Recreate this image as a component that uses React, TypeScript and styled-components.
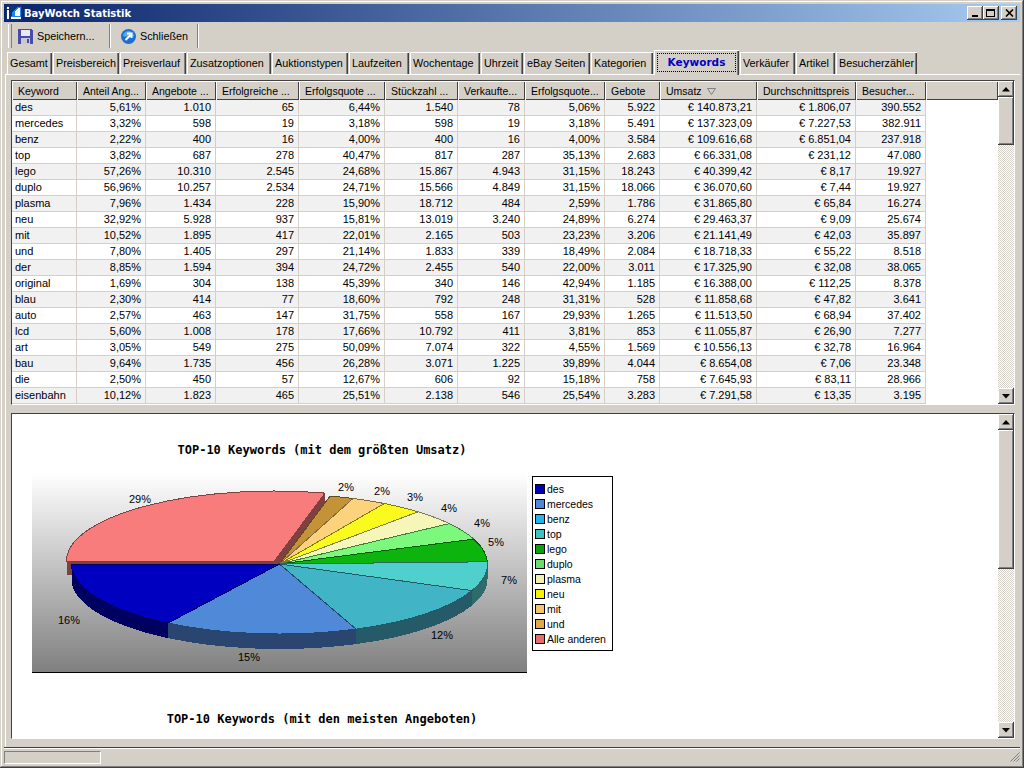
import React from "react";
import styled, { createGlobalStyle } from "styled-components";

const Global = createGlobalStyle`
  html, body { margin: 0; padding: 0; background: #d4d0c8; }
  * { box-sizing: border-box; }
  body { font-family: "Liberation Sans", Arial, sans-serif; font-size: 11px; color: #000; }
`;

const Window = styled.div`
  width: 1024px; height: 768px; overflow: hidden;
  background: #d4d0c8; padding: 4px;
  display: flex; flex-direction: column;
  box-shadow: inset -1px -1px #404040, inset 1px 1px #d4d0c8, inset -2px -2px #808080, inset 2px 2px #fff;
`;
const TitleBar = styled.div`
  height: 18px; flex: none; display: flex; align-items: center;
  background: linear-gradient(90deg, #0a246a, #a6caf0);
  padding: 0 3px 0 2px;
`;
const TitleText = styled.span`
  font: bold 10px "DejaVu Sans", Verdana, sans-serif; color: #fff; margin-left: 2px; flex: 1; white-space: nowrap;
`;
const WinButton = styled.div<{ $gap?: number }>`
  width: 16px; height: 14px; margin-left: ${p => p.$gap ?? 0}px;
  background: #d4d0c8; display: flex; align-items: center; justify-content: center;
  box-shadow: inset -1px -1px #404040, inset 1px 1px #fff, inset -2px -2px #808080;
`;
const Toolbar = styled.div`
  height: 26px; flex: none; margin-top: 1px; display: flex; align-items: stretch; padding-left: 4px;
`;
const Grip = styled.div`
  width: 4px; margin: 1px 0; border-left: 1px solid #fff; border-right: 1px solid #808080;
  box-shadow: inset 0 1px #d4d0c8;
`;
const ToolButton = styled.div<{ $w: number; $pad: number }>`
  width: ${p => p.$w}px; padding-left: ${p => p.$pad}px;
  display: flex; align-items: center; gap: 4px; font-size: 10.8px; white-space: nowrap;
`;
const Etch = styled.div`
  width: 2px; margin: 1px 0; border-left: 1px solid #808080; border-right: 1px solid #fff;
`;
const TabStrip = styled.div`
  height: 25px; flex: none; display: flex; align-items: flex-end; padding-left: 3px; gap: 1px;
  position: relative; z-index: 1;
`;
const Tab = styled.div<{ $w: number; $active?: boolean }>`
  width: ${p => p.$w}px;
  height: ${p => (p.$active ? 25 : 22)}px;
  margin-bottom: ${p => (p.$active ? -1 : 0)}px;
  padding-left: ${p => (p.$active ? 0 : 3)}px;
  background: #d4d0c8; display: flex; align-items: center;
  justify-content: ${p => (p.$active ? "center" : "flex-start")};
  white-space: nowrap; font-size: 10.8px;
  box-shadow: inset 1px 1px #fff, inset -1px 0 #404040, inset -2px 0 #808080;
  ${p => p.$active && `color: #0000c8; font: bold 10.5px "DejaVu Sans", Verdana, sans-serif;`}
`;
const FocusRing = styled.span`
  border: 1px dotted #000; width: calc(100% - 6px); height: 19px; margin-top: -1px;
  display: flex; align-items: center; justify-content: center;
`;
const Panel = styled.div`
  flex: 1; min-height: 0; display: flex; flex-direction: column;
  padding: 5px 5px 6px 5px; border-top: 1px solid #fff; border-left: 1px solid #fff; margin-left: 1px;
`;
const SunkenBox = styled.div<{ $h: number }>`
  height: ${p => p.$h}px; flex: none; display: flex; background: #fff; overflow: hidden;
  border: 1px solid; border-color: #404040 #fff #fff #404040;
`;
const Splitter = styled.div`
  height: 8px; flex: none;
`;
const TableArea = styled.div`
  flex: 1; min-width: 0; overflow: hidden;
`;
const Grid = styled.table`
  width: 100%; table-layout: fixed; border-collapse: separate; border-spacing: 0;
`;
const Head = styled.th`
  height: 19px; padding: 0 0 0 6px; background: #d4d0c8; font-weight: normal; text-align: left;
  white-space: nowrap; overflow: hidden; font-size: 10.5px;
  box-shadow: inset 1px 1px #fff, inset -1px -1px #404040;
`;
const Cell = styled.td<{ $num?: boolean; $alt?: boolean }>`
  height: 16px; padding: ${p => (p.$num ? "0 4px 0 0" : "0 0 0 3px")};
  text-align: ${p => (p.$num ? "right" : "left")};
  background: ${p => (p.$alt ? "#f1f1f1" : "#fff")};
  border-right: 1px solid #d4d0c8; border-bottom: 1px solid #d4d0c8;
  white-space: nowrap; overflow: hidden; line-height: 15px; font-size: 11px;
`;
const Blank = styled.td`
  background: #fff; padding: 0;
`;
const ScrollBar = styled.div`
  width: 16px; flex: none; display: flex; flex-direction: column;
`;
const ScrollBtn = styled.div`
  height: 16px; flex: none; background: #d4d0c8; display: flex; align-items: center; justify-content: center;
  box-shadow: inset -1px -1px #404040, inset 1px 1px #fff, inset -2px -2px #808080;
`;
const Thumb = styled.div<{ $h: number }>`
  height: ${p => p.$h}px; flex: none; background: #d4d0c8;
  box-shadow: inset -1px -1px #404040, inset 1px 1px #fff, inset -2px -2px #808080;
`;
const Track = styled.div`
  flex: 1; background: repeating-conic-gradient(#d4d0c8 0 25%, #fff 0 50%) 0 0 / 2px 2px;
`;
const ChartArea = styled.div`
  flex: 1; min-width: 0; overflow: hidden; background: #fff;
`;
const ChartTitle = styled.div<{ $top: number; $h: number }>`
  width: 620px; text-align: center; padding-top: ${p => p.$top}px; height: ${p => p.$h}px;
  font: bold 12px/16px "DejaVu Sans Mono", monospace; white-space: nowrap;
`;
const ChartRow = styled.div`
  display: flex; align-items: flex-start; padding-left: 20px;
`;
const Plot = styled.svg`
  width: 495px; height: 200px; display: block; flex: none;
`;
const Legend = styled.div`
  width: 81px; height: 175px; margin: 3px 0 0 5px; background: #fff; border: 1px solid #000;
  padding: 4px 0 0 2px; display: flex; flex-direction: column;
`;
const LegendRow = styled.div`
  height: 15px; display: flex; align-items: center; gap: 2px; white-space: nowrap; font-size: 10.5px;
`;
const Swatch = styled.span<{ $c: string }>`
  width: 10px; height: 10px; flex: none; background: ${p => p.$c}; border: 1px solid #000;
`;
const StatusBar = styled.div`
  height: 17px; flex: none; display: flex; align-items: center; justify-content: space-between;
  border-top: 1px solid #404040; box-shadow: inset 0 1px #fff; padding: 2px 0 0 0;
`;
const StatusPane = styled.div`
  width: 97px; height: 13px; border: 1px solid; border-color: #808080 #fff #fff #808080;
`;

const Up = () => (<svg width="8" height="5" viewBox="0 0 8 5"><path d="M4 0L8 4.5H0Z" fill="#000" /></svg>);
const Down = () => (<svg width="8" height="5" viewBox="0 0 8 5"><path d="M0 0H8L4 4.5Z" fill="#000" /></svg>);

const Bar = ({ thumb }: { thumb: number }) => (
  <ScrollBar>
    <ScrollBtn><Up /></ScrollBtn>
    <Thumb $h={thumb} />
    <Track />
    <ScrollBtn><Down /></ScrollBtn>
  </ScrollBar>
);

const AppIcon = () => (
  <svg width="16" height="16" viewBox="0 0 16 16" shapeRendering="crispEdges">
    <rect width="16" height="16" fill="#10307a" />
    <rect x="1" y="2" width="2" height="2" fill="#fff" />
    <rect x="1" y="5" width="2" height="9" fill="#fff" />
    <path d="M6 8L11 2L15 2L15 14L5 14Z" fill="#1e88e8" />
    <path d="M9 7L12 3L14 3L14 11L9 11Z" fill="#fff" />
    <rect x="5" y="12" width="10" height="2" fill="#fff" />
  </svg>
);
const SaveIcon = () => (
  <svg width="15" height="15" viewBox="0 0 15 15" shapeRendering="crispEdges">
    <path d="M0 0H13L15 2V15H0Z" fill="#4a4aa8" />
    <rect x="3" y="1" width="9" height="6" fill="#e8e8f8" />
    <rect x="3" y="9" width="9" height="6" fill="#c8c8d8" />
    <rect x="9" y="10" width="2" height="4" fill="#4a4aa8" />
  </svg>
);
const CloseIcon = () => (
  <svg width="15" height="15" viewBox="0 0 15 15">
    <circle cx="7.5" cy="7.5" r="7.5" fill="#1a6fd0" />
    <path d="M2 7.5A5.5 5.5 0 0 1 13 7.5Z" fill="#5aa8f0" />
    <path d="M4.5 11L9.5 6M6 4.5H10.5V9" stroke="#fff" strokeWidth="2" fill="none" />
  </svg>
);

const tabs: [string, number][] = [
  ["Gesamt", 45], ["Preisbereich", 66], ["Preisverlauf", 66], ["Zusatzoptionen", 84], ["Auktionstypen", 76],
  ["Laufzeiten", 60], ["Wochentage", 70], ["Uhrzeit", 42], ["eBay Seiten", 66], ["Kategorien", 62],
  ["Keywords", 85], ["Verkäufer", 55], ["Artikel", 39], ["Besucherzähler", 81],
];
const cols = [65, 69, 70, 83, 86, 73, 67, 80, 55, 97, 99, 70];
const heads = ["Keyword", "Anteil Ang...", "Angebote ...", "Erfolgreiche ...", "Erfolgsquote ...", "Stückzahl ...", "Verkaufte...", "Erfolgsquote...", "Gebote", "Umsatz", "Durchschnittspreis", "Besucher..."];
const rows = `des|5,61%|1.010|65|6,44%|1.540|78|5,06%|5.922|€ 140.873,21|€ 1.806,07|390.552
mercedes|3,32%|598|19|3,18%|598|19|3,18%|5.491|€ 137.323,09|€ 7.227,53|382.911
benz|2,22%|400|16|4,00%|400|16|4,00%|3.584|€ 109.616,68|€ 6.851,04|237.918
top|3,82%|687|278|40,47%|817|287|35,13%|2.683|€ 66.331,08|€ 231,12|47.080
lego|57,26%|10.310|2.545|24,68%|15.867|4.943|31,15%|18.243|€ 40.399,42|€ 8,17|19.927
duplo|56,96%|10.257|2.534|24,71%|15.566|4.849|31,15%|18.066|€ 36.070,60|€ 7,44|19.927
plasma|7,96%|1.434|228|15,90%|18.712|484|2,59%|1.786|€ 31.865,80|€ 65,84|16.274
neu|32,92%|5.928|937|15,81%|13.019|3.240|24,89%|6.274|€ 29.463,37|€ 9,09|25.674
mit|10,52%|1.895|417|22,01%|2.165|503|23,23%|3.206|€ 21.141,49|€ 42,03|35.897
und|7,80%|1.405|297|21,14%|1.833|339|18,49%|2.084|€ 18.718,33|€ 55,22|8.518
der|8,85%|1.594|394|24,72%|2.455|540|22,00%|3.011|€ 17.325,90|€ 32,08|38.065
original|1,69%|304|138|45,39%|340|146|42,94%|1.185|€ 16.388,00|€ 112,25|8.378
blau|2,30%|414|77|18,60%|792|248|31,31%|528|€ 11.858,68|€ 47,82|3.641
auto|2,57%|463|147|31,75%|558|167|29,93%|1.265|€ 11.513,50|€ 68,94|37.402
lcd|5,60%|1.008|178|17,66%|10.792|411|3,81%|853|€ 11.055,87|€ 26,90|7.277
art|3,05%|549|275|50,09%|7.074|322|4,55%|1.569|€ 10.556,13|€ 32,78|16.964
bau|9,64%|1.735|456|26,28%|3.071|1.225|39,89%|4.044|€ 8.654,08|€ 7,06|23.348
die|2,50%|450|57|12,67%|606|92|15,18%|758|€ 7.645,93|€ 83,11|28.966
eisenbahn|10,12%|1.823|465|25,51%|2.138|546|25,54%|3.283|€ 7.291,58|€ 13,35|3.195`.split("\n").map(r => r.split("|"));

const legend: [string, string][] = [
  ["des", "#0000b8"], ["mercedes", "#4f86d8"], ["benz", "#20b4f0"], ["top", "#3cc0c0"], ["lego", "#0ca00c"],
  ["duplo", "#68e068"], ["plasma", "#f0f0b0"], ["neu", "#f4f400"], ["mit", "#f8c468"], ["und", "#e0a848"], ["Alle anderen", "#e86c6c"],
];

const CX = 279.5, CY = 564, RX = 208, RY = 70, D = 15;
const pt = (f: number, ox = 0, oy = 0) => {
  const t = Math.PI + f * 2 * Math.PI;
  return [CX + RX * Math.cos(t) + ox, CY - RY * Math.sin(t) + oy];
};
const n = (v: number) => v.toFixed(1);
const topPath = (a: number, b: number, ox = 0, oy = 0) => {
  const [x1, y1] = pt(a, ox, oy), [x2, y2] = pt(b, ox, oy);
  return `M${n(CX + ox)} ${n(CY + oy)}L${n(x1)} ${n(y1)}A${RX} ${RY} 0 ${b - a > 0.5 ? 1 : 0} 0 ${n(x2)} ${n(y2)}Z`;
};
const wallPath = (a: number, b: number) => {
  const [x1, y1] = pt(a), [x2, y2] = pt(b);
  return `M${n(x1)} ${n(y1)}A${RX} ${RY} 0 0 0 ${n(x2)} ${n(y2)}L${n(x2)} ${n(y2 + D)}A${RX} ${RY} 0 0 1 ${n(x1)} ${n(y1 + D)}Z`;
};
const OX = -5, OY = -3;
const pinkA = pt(0.711, OX, OY), pinkB = pt(1, OX, OY), pinkC = [CX + OX, CY + OY];
const pinkWalls = `M${n(pinkC[0])} ${n(pinkC[1])}L${n(pinkA[0])} ${n(pinkA[1])}V${n(pinkA[1] + 14)}L${n(pinkC[0])} ${n(pinkC[1] + 14)}Z M${n(pinkB[0])} ${n(pinkB[1])}H${n(pinkC[0])}V${n(pinkC[1] + 14)}H${n(pinkB[0])}Z`;

const upper: [number, number, string, string][] = [
  [0.6925, 0.711, "#c49338", "#624a1c"],
  [0.666, 0.6925, "#fcd27c", "#7e693e"],
  [0.634, 0.666, "#fafa1e", "#7d7d0f"],
  [0.598, 0.634, "#f6f6b8", "#7b7b5c"],
  [0.558, 0.598, "#7cf87c", "#3e7c3e"],
  [0.505, 0.558, "#0eb40e", "#075a07"],
];
const lower: [number, number, string, string, string][] = [
  [0.438, 0.505, "#50d0cc", "#286866", "#2f6a6c"],
  [0.31, 0.438, "#41b4c6", "#205a63", "#265a68"],
  [0.16, 0.31, "#5089d8", "#28456c", "#2a4670"],
  [0, 0.16, "#0000c0", "#000060", "#000060"],
];
const labels: [string, number, number][] = [
  ["29%", 140, 503], ["16%", 69, 624], ["15%", 249, 661], ["12%", 442, 639], ["7%", 509, 584], ["5%", 496, 546],
  ["4%", 482, 527], ["4%", 449, 512], ["3%", 415, 501], ["2%", 382, 495], ["2%", 346, 491],
];

const PieChart = () => (
  <Plot viewBox="32 473 495 200">
    <defs>
      <linearGradient id="bg" x1="0" y1="0" x2="0" y2="1">
        <stop offset="0" stopColor="#fff" />
        <stop offset="1" stopColor="#808080" />
      </linearGradient>
    </defs>
    <rect x="32" y="473" width="495" height="199" fill="url(#bg)" />
    <rect x="32" y="672" width="495" height="1" fill="#000" />
    <g shapeRendering="crispEdges">
      <path d={pinkWalls} fill="#7f4040" />
      <path d={topPath(0.711, 1, OX, OY)} fill="#f87c7c" stroke="#7f4040" />
      {upper.map(([a, b, f, s], i) => <path key={i} d={topPath(a, b)} fill={f} stroke={s} />)}
      {lower.map(([a, b, , , w], i) => <path key={i} d={wallPath(a, Math.min(b, 0.5))} fill={w} />)}
      {lower.map(([a, b, f, s], i) => <path key={i} d={topPath(a, b)} fill={f} stroke={s} />)}
    </g>
    {labels.map(([t, x, y], i) => (
      <text key={i} x={x} y={y} textAnchor="middle" fontSize="11" fontFamily='"Liberation Sans", Arial, sans-serif' fill="#000">{t}</text>
    ))}
  </Plot>
);

export default function App() {
  return (
    <Window>
      <Global />
      <TitleBar>
        <AppIcon />
        <TitleText>BayWotch Statistik</TitleText>
        <WinButton><svg width="8" height="8"><rect x="1" y="6" width="6" height="2" fill="#000" /></svg></WinButton>
        <WinButton><svg width="10" height="10" shapeRendering="crispEdges"><path d="M0.5 1.5H8.5V8.5H0.5Z" fill="none" stroke="#000" /><rect y="1" width="9" height="2" fill="#000" /></svg></WinButton>
        <WinButton $gap={2}><svg width="9" height="8"><path d="M1 0.5L8 7.5M8 0.5L1 7.5" stroke="#000" strokeWidth="1.6" /></svg></WinButton>
      </TitleBar>
      <Toolbar>
        <Grip />
        <ToolButton $w={97} $pad={6}><SaveIcon /><span>Speichern...</span></ToolButton>
        <Etch />
        <ToolButton $w={86} $pad={10}><CloseIcon /><span>Schließen</span></ToolButton>
        <Etch />
      </Toolbar>
      <TabStrip>
        {tabs.map(([t, w]) => (
          <Tab key={t} $w={w} $active={t === "Keywords"}>
            {t === "Keywords" ? <FocusRing>{t}</FocusRing> : t}
          </Tab>
        ))}
      </TabStrip>
      <Panel>
        <SunkenBox $h={325}>
          <TableArea>
            <Grid>
              <colgroup>
                {cols.map((w, i) => <col key={i} style={{ width: w }} />)}
                <col />
              </colgroup>
              <thead>
                <tr>
                  {heads.map(h => (
                    <Head key={h}>
                      {h}
                      {h === "Umsatz" && (
                        <svg width="9" height="7" viewBox="0 0 9 7" style={{ marginLeft: 5 }}>
                          <path d="M0.5 0.5H8.5L4.5 6.5Z" fill="none" stroke="#808080" />
                        </svg>
                      )}
                    </Head>
                  ))}
                  <Head />
                </tr>
              </thead>
              <tbody>
                {rows.map((r, i) => (
                  <tr key={r[0]}>
                    {r.map((c, j) => <Cell key={j} $num={j > 0} $alt={i % 2 === 0}>{c}</Cell>)}
                    <Blank />
                  </tr>
                ))}
              </tbody>
            </Grid>
          </TableArea>
          <Bar thumb={48} />
        </SunkenBox>
        <Splitter />
        <SunkenBox $h={326}>
          <ChartArea>
            <ChartTitle $top={28} $h={59}>TOP-10 Keywords (mit dem größten Umsatz)</ChartTitle>
            <ChartRow>
              <PieChart />
              <Legend>
                {legend.map(([t, c]) => <LegendRow key={t}><Swatch $c={c} />{t}</LegendRow>)}
              </Legend>
            </ChartRow>
            <ChartTitle $top={38} $h={62}>TOP-10 Keywords (mit den meisten Angeboten)</ChartTitle>
          </ChartArea>
          <Bar thumb={139} />
        </SunkenBox>
      </Panel>
      <StatusBar>
        <StatusPane />
        <svg width="10" height="10" viewBox="0 0 10 10">
          <path d="M9.5 0.5L0.5 9.5M9.5 3.5L3.5 9.5M9.5 6.5L6.5 9.5" stroke="#808080" fill="none" />
        </svg>
      </StatusBar>
    </Window>
  );
}
